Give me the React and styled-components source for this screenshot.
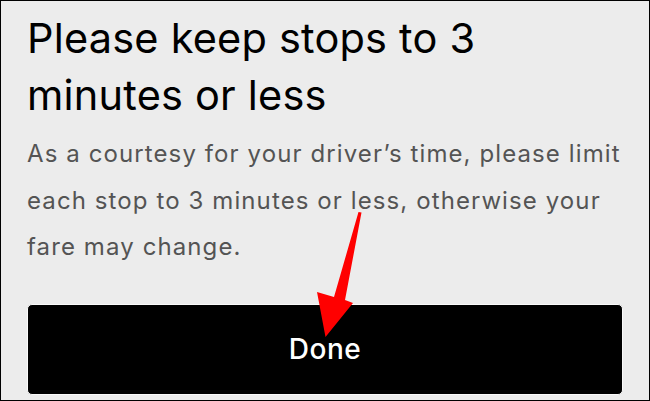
import React from "react";
import styled, { createGlobalStyle } from "styled-components";

const Global = createGlobalStyle`
  html, body { margin: 0; padding: 0; background: #ececec; }
  * { box-sizing: border-box; }
`;

const Frame = styled.div`
  position: relative;
  width: 650px;
  height: 401px;
  border: 1px solid #000;
  background: #ececec;
  padding: 9px 26px 0 26px;
  display: flex;
  flex-direction: column;
  overflow: hidden;
  font-family: Inter, "Liberation Sans", sans-serif;
`;

const Title = styled.h1`
  margin: 0;
  font-size: 41.5px;
  line-height: 57px;
  font-weight: 400;
  color: #000;
  letter-spacing: 0.2px;
  white-space: nowrap;
`;

const Body = styled.p`
  margin: 7px 0 0 0;
  font-size: 24px;
  line-height: 46.5px;
  color: #545454;
  font-weight: 400;
  letter-spacing: 1.1px;
  white-space: nowrap;
`;

const DoneButton = styled.button`
  margin-top: 33px;
  height: 91px;
  width: 100%;
  background: #000;
  color: #fff;
  border: 1px solid #fafafa;
  border-radius: 5px;
  font-family: Inter, "Liberation Sans", sans-serif;
  font-size: 28px;
  font-weight: 500;
  letter-spacing: 0.5px;
  display: flex;
  align-items: center;
  justify-content: center;
  padding: 0;
`;

const Arrow = styled.svg`
  position: absolute;
  left: -1px;
  top: -1px;
  width: 650px;
  height: 401px;
  pointer-events: none;
`;

export default function App() {
  return (
    <>
      <Global />
      <Frame>
        <Title>
          Please keep stops to 3<br />
          minutes or less
        </Title>
        <Body>
          As a courtesy for your driver’s time, please limit
          <br />
          each stop to 3 minutes or less, otherwise your
          <br />
          fare may change.
        </Body>
        <DoneButton>Done</DoneButton>
        <Arrow viewBox="0 0 650 401">
          <polygon
            points="358.5,212 361.5,212.5 345,300 353,303 325.5,337 317,292 334,297"
            fill="#ff0000"
          />
        </Arrow>
      </Frame>
    </>
  );
}
